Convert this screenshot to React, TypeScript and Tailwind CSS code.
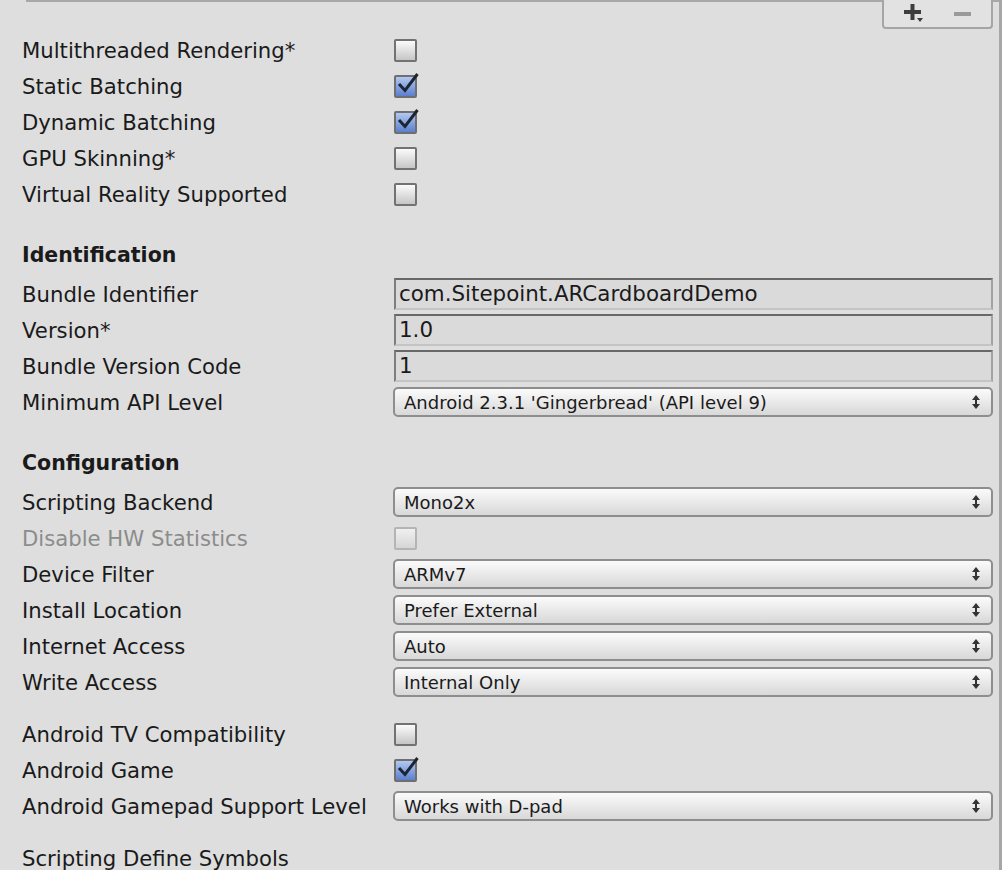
import React from 'react';

const font = { fontFamily: '"DejaVu Sans", "Liberation Sans", sans-serif' };

const Checkbox = ({ checked, disabled }: { checked?: boolean; disabled?: boolean }) => {
  return (
    <div className="relative h-[23px] w-[23px]">
      <div
        className={`h-full w-full rounded-[2px] border-2 ${
          disabled
            ? 'border-[#b4b4b4] bg-gradient-to-b from-[#f0f0f0] to-[#d6d6d6]'
            : checked
              ? 'border-[#6f6f6f] bg-gradient-to-b from-[#b3c8f0] to-[#5c80cf]'
              : 'border-[#727272] bg-gradient-to-b from-[#fbfbfb] to-[#c6c6c6]'
        }`}
      />
      {checked && (
        <svg className="absolute -top-[4px] left-[2px] h-[24px] w-[24px]" viewBox="0 0 24 24">
          <path d="M3 13 L9 19.5 L21.5 3" fill="none" stroke="#1c2633" strokeWidth="3" />
        </svg>
      )}
    </div>
  );
};

const TextField = ({ value }: { value: string }) => {
  return (
    <div className="flex h-[32px] w-[599px] items-center border-2 border-t-[#686868] border-l-[#7e7e7e] border-r-[#a2a2a2] border-b-[#c4c4c4] bg-[#dadada] pl-[3px] text-[21.4px] text-[#1a1a1a]">
      {value}
    </div>
  );
};

const Popup = ({ value }: { value: string }) => {
  return (
    <div className="flex h-[30px] w-[600px] items-center justify-between rounded-[5px] border-2 border-[#8e8e8e] bg-gradient-to-b from-[#fbfbfb] to-[#d8d8d8] pr-[11px] pl-[9px] text-[18px] text-[#1a1a1a]">
      <span>{value}</span>
      <svg width="8" height="14" viewBox="0 0 8 14">
        <path d="M4 0 L8 5 L0 5 Z" fill="#333" />
        <path d="M4 14 L8 9 L0 9 Z" fill="#333" />
        <rect x="3" y="4" width="2" height="6" fill="#333" />
      </svg>
    </div>
  );
};

type RowProps = { label: string; children?: React.ReactNode; disabled?: boolean };

const Row = ({ label, children, disabled }: RowProps) => {
  return (
    <div className="flex h-[36px] items-center">
      <div
        className={`w-[372px] pt-[2px] pl-[22px] text-[21.2px] ${disabled ? 'text-[#8c8c8c]' : 'text-[#1a1a1a]'}`}
      >
        {label}
      </div>
      {children}
    </div>
  );
};

const Heading = ({ label }: { label: string }) => {
  return (
    <div className="mb-[4px] flex h-[36px] items-center pt-[2px] pl-[22px] text-[20.5px] font-bold text-[#1a1a1a]">
      {label}
    </div>
  );
};

const CheckCell = ({ checked, disabled }: { checked?: boolean; disabled?: boolean }) => (
  <div className="pl-[22px]">
    <Checkbox checked={checked} disabled={disabled} />
  </div>
);

const FieldCell = ({ children }: { children: React.ReactNode }) => <div className="pl-[22px]">{children}</div>;

const PopupCell = ({ value }: { value: string }) => (
  <div className="pl-[21px]">
    <Popup value={value} />
  </div>
);

export default function App() {
  return (
    <div
      className="relative h-[870px] w-[1002px] overflow-hidden border-r-[3px] border-[#a6a6a6] bg-[#dedede]"
      style={font}
    >
      <div className="flex h-[32px]">
        <div className="ml-[26px] h-[2px] flex-1 bg-[#a8a8a8]" />
        <div className="flex h-[29px] w-[111px] items-center justify-between rounded-b-[4px] border-x-2 border-b-2 border-[#a5a5a5] bg-[#e2e2e2] px-[20px]">
          <svg width="22" height="20" viewBox="0 0 22 20">
            <rect x="0" y="6" width="17" height="4" fill="#3d3d3d" />
            <rect x="6.5" y="0" width="4" height="16" fill="#3d3d3d" />
            <path d="M13 14 L19 14 L16 18 Z" fill="#3d3d3d" />
          </svg>
          <div className="h-[4px] w-[17px] bg-[#9a9a9a]" />
        </div>
        <div className="h-[2px] w-[6px] bg-[#a8a8a8]" />
      </div>

      <Row label="Multithreaded Rendering*">
        <CheckCell />
      </Row>
      <Row label="Static Batching">
        <CheckCell checked />
      </Row>
      <Row label="Dynamic Batching">
        <CheckCell checked />
      </Row>
      <Row label="GPU Skinning*">
        <CheckCell />
      </Row>
      <Row label="Virtual Reality Supported">
        <CheckCell />
      </Row>

      <div className="h-[24px]" />
      <Heading label="Identification" />
      <Row label="Bundle Identifier">
        <FieldCell>
          <TextField value="com.Sitepoint.ARCardboardDemo" />
        </FieldCell>
      </Row>
      <Row label="Version*">
        <FieldCell>
          <TextField value="1.0" />
        </FieldCell>
      </Row>
      <Row label="Bundle Version Code">
        <FieldCell>
          <TextField value="1" />
        </FieldCell>
      </Row>
      <Row label="Minimum API Level">
        <PopupCell value="Android 2.3.1 'Gingerbread' (API level 9)" />
      </Row>

      <div className="h-[24px]" />
      <Heading label="Configuration" />
      <Row label="Scripting Backend">
        <PopupCell value="Mono2x" />
      </Row>
      <Row label="Disable HW Statistics" disabled>
        <CheckCell disabled />
      </Row>
      <Row label="Device Filter">
        <PopupCell value="ARMv7" />
      </Row>
      <Row label="Install Location">
        <PopupCell value="Prefer External" />
      </Row>
      <Row label="Internet Access">
        <PopupCell value="Auto" />
      </Row>
      <Row label="Write Access">
        <PopupCell value="Internal Only" />
      </Row>

      <div className="h-[16px]" />
      <Row label="Android TV Compatibility">
        <CheckCell />
      </Row>
      <Row label="Android Game">
        <CheckCell checked />
      </Row>
      <Row label="Android Gamepad Support Level">
        <PopupCell value="Works with D-pad" />
      </Row>

      <div className="h-[16px]" />
      <Row label="Scripting Define Symbols" />
    </div>
  );
}
